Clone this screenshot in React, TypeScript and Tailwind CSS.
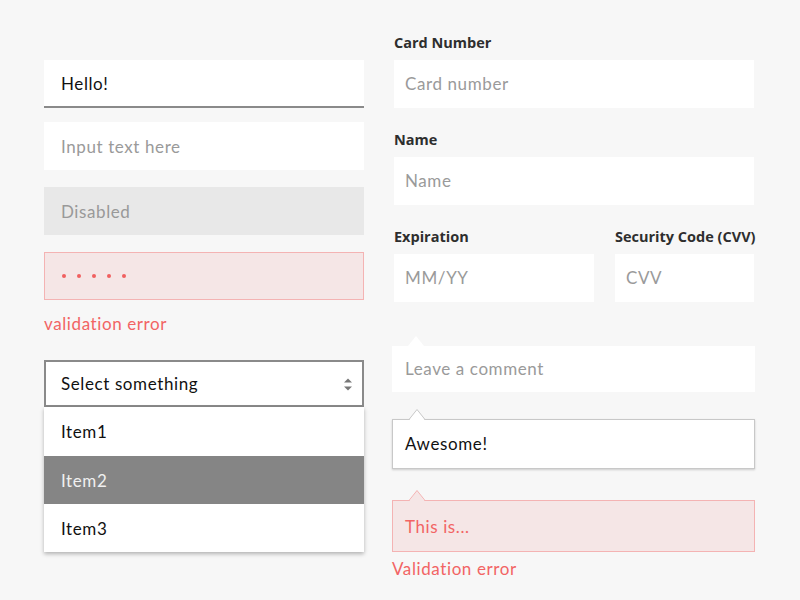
import React from "react";

const inputFont = { fontFamily: "Lato, 'Noto Sans', sans-serif" };

function Arrow({ fill, stroke }: { fill: string; stroke?: string }) {
  if (!stroke) {
    return (
      <svg className="absolute left-[16px] top-[-10px]" width="16" height="10" viewBox="0 0 16 10">
        <polygon points="0,10 8,0 16,10" fill={fill} />
      </svg>
    );
  }
  return (
    <svg className="absolute left-[16px] top-[-11px]" width="16" height="12" viewBox="0 0 16 12">
      <polygon points="0,11.5 8,0.5 16,11.5" fill={fill} />
      <polyline points="0,10.5 8,0.5 16,10.5" fill="none" stroke={stroke} strokeWidth="1" />
    </svg>
  );
}

function Label({ children }: { children: React.ReactNode }) {
  return (
    <div
      className="h-5 mb-[7px] text-[14.5px] leading-5 font-bold text-[#2e2e2e] whitespace-nowrap"
      style={{ fontFamily: "'Open Sans', sans-serif" }}
    >
      {children}
    </div>
  );
}

function Field({ children, className = "" }: { children: React.ReactNode; className?: string }) {
  return (
    <div className={"h-[48px] bg-white flex items-center pl-[11px] text-[17px] tracking-[0.6px] text-[#9a9a9a] " + className}>
      {children}
    </div>
  );
}

export default function App() {
  return (
    <div className="w-[800px] h-[600px] bg-[#f7f7f7] overflow-hidden" style={inputFont}>
      <div className="flex pl-[44px]">
        {/* Left column */}
        <div className="w-[320px] shrink-0 pt-[60px] flex flex-col text-[17px] tracking-[0.6px]">
          <div className="h-[48px] bg-white border-b-2 border-[#8a8a8a] flex items-center pl-[17px] pt-[2px] text-[#111]">
            Hello!
          </div>
          <div className="mt-[14px] h-[48px] bg-white flex items-center pl-[17px] pt-[1px] text-[#9a9a9a]">
            Input text here
          </div>
          <div className="mt-[17px] h-[48px] bg-[#e8e8e8] flex items-center pl-[17px] pt-[1px] text-[#999]">
            Disabled
          </div>
          <div className="mt-[17px] h-[48px] bg-[#f5e6e6] border border-[#f4b3b3] flex items-center pl-[17px] gap-[11px]">
            <span className="w-[4px] h-[4px] rounded-full bg-[#f06060]" />
            <span className="w-[4px] h-[4px] rounded-full bg-[#f06060]" />
            <span className="w-[4px] h-[4px] rounded-full bg-[#f06060]" />
            <span className="w-[4px] h-[4px] rounded-full bg-[#f06060]" />
            <span className="w-[4px] h-[4px] rounded-full bg-[#f06060]" />
          </div>
          <div className="mt-[14px] leading-5 text-[#f26464]">validation error</div>
          <div className="mt-[26px] h-[47px] bg-white border-2 border-[#8a8a8a] flex items-center justify-between pl-[15px] pr-[10px] pt-[1px] text-[#111]">
            <span>Select something</span>
            <svg width="8" height="13" viewBox="0 0 8 13">
              <polygon points="0,4.5 4,0.5 8,4.5" fill="#777" />
              <polygon points="0,8.5 4,12.5 8,8.5" fill="#777" />
            </svg>
          </div>
          <div className="bg-white shadow-[0_2px_4px_rgba(0,0,0,0.28)] flex flex-col">
            <div className="h-[49px] flex items-center pl-[17px] pt-[1px] text-[#111]">Item1</div>
            <div className="h-[48px] flex items-center pl-[17px] pt-[1px] bg-[#858585] text-[#f0f0f0]">Item2</div>
            <div className="h-[48px] flex items-center pl-[17px] pt-[1px] text-[#111]">Item3</div>
          </div>
        </div>

        {/* Right column */}
        <div className="ml-[30px] w-[360px] shrink-0 pt-[33px] flex flex-col">
          <Label>Card Number</Label>
          <Field>Card number</Field>
          <div className="mt-[22px]">
            <Label>Name</Label>
            <Field>Name</Field>
          </div>
          <div className="mt-[22px] flex gap-[21px]">
            <div className="w-[200px] shrink-0">
              <Label>Expiration</Label>
              <Field>MM/YY</Field>
            </div>
            <div className="w-[139px] shrink-0 min-w-0">
              <Label>Security Code (CVV)</Label>
              <Field>CVV</Field>
            </div>
          </div>

          <div className="ml-[-2px] w-[363px] flex flex-col text-[17px] tracking-[0.6px]">
            <div className="relative mt-[44px] h-[46px] bg-white flex items-center pl-[13px] text-[#9a9a9a]">
              <Arrow fill="#ffffff" />
              Leave a comment
            </div>
            <div className="relative mt-[27px] h-[50px] bg-white border border-[#c8c8c8] shadow-[0_1px_2px_rgba(0,0,0,0.18)] flex items-center pl-[12px] text-[#111]">
              <Arrow fill="#ffffff" stroke="#c8c8c8" />
              Awesome!
            </div>
            <div className="relative mt-[31px] h-[52px] bg-[#f5e6e6] border border-[#f4b3b3] flex items-center pl-[12px] pt-[1px] text-[#f26464]">
              <Arrow fill="#f5e6e6" stroke="#f4b3b3" />
              This is...
            </div>
            <div className="mt-[7px] leading-5 text-[#f26464]">Validation error</div>
          </div>
        </div>
      </div>
    </div>
  );
}
